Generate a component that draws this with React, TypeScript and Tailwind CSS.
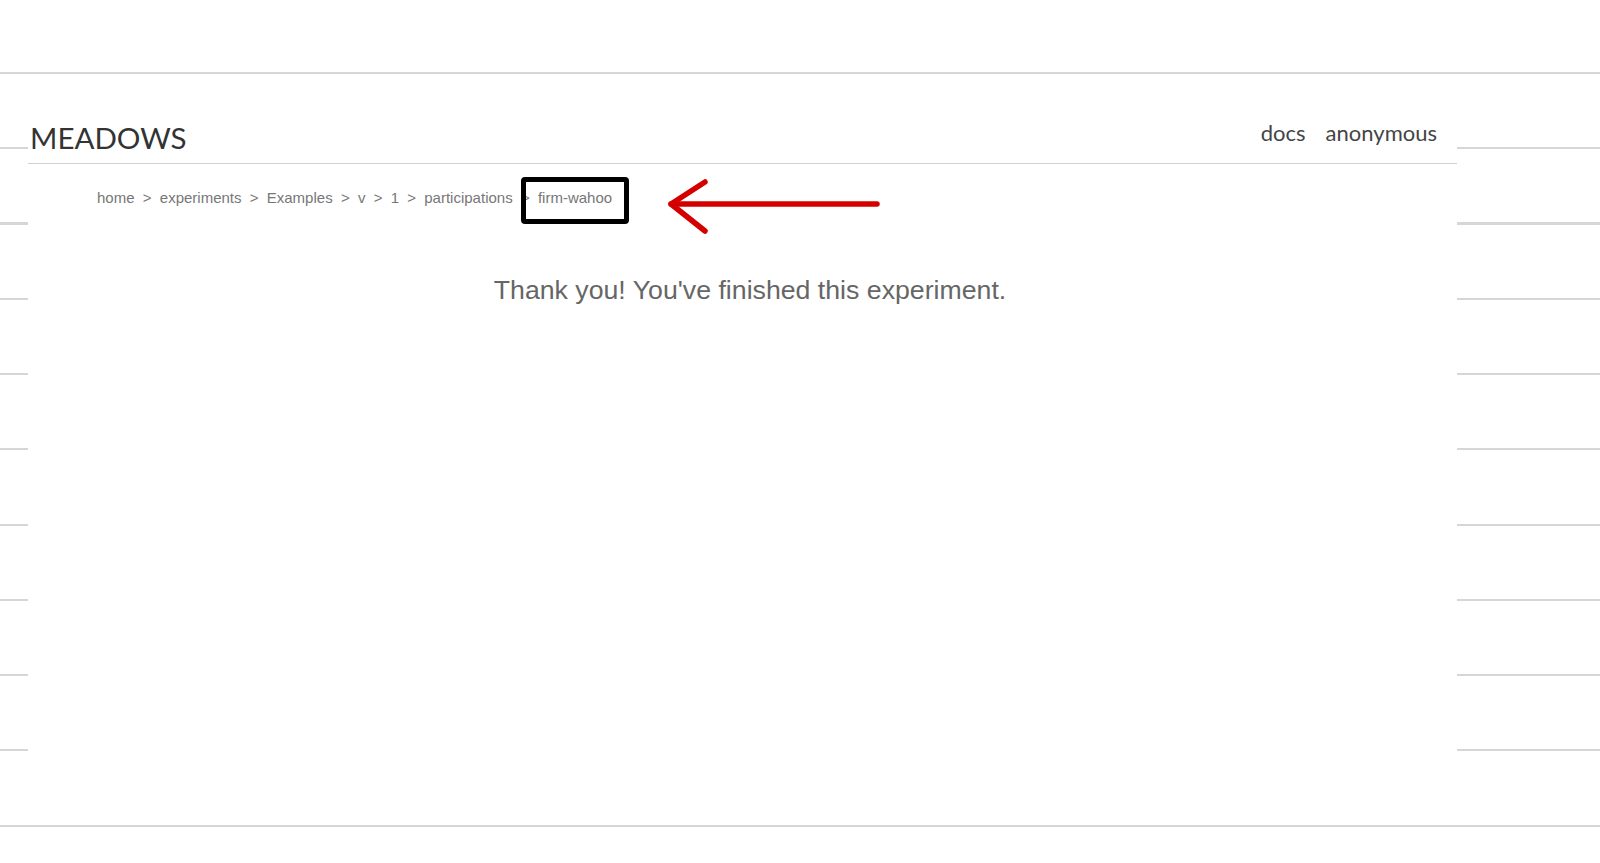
import React from 'react';

const crumbs = ['home', 'experiments', 'Examples', 'v', '1', 'participations'];

const Breadcrumb = () => (
  <div className="pl-[69px] mt-[24px] flex items-center text-[15px] leading-[20px] text-[#777] font-['Liberation_Sans',Arial,sans-serif]">
    {crumbs.map((c) => (
      <React.Fragment key={c}>
        <span>{c}</span>
        <span className="mx-[8.25px]">&gt;</span>
      </React.Fragment>
    ))}
    <span className="relative">
      firm-wahoo
      {/* annotation box */}
      <span className="absolute left-[-17px] right-[-17px] top-[-11px] bottom-[-16px] border-[5px] border-black rounded-[4px]" />
    </span>
  </div>
);

export default function App() {
  return (
    <div className="relative h-[863px] bg-white pt-[72px] overflow-hidden">
      <div className="h-[755px] pt-[3px] bg-[repeating-linear-gradient(to_bottom,#d6d6d6_0px,#d6d6d6_2px,transparent_2px,transparent_75.25px)]">
        <div className="ml-[28px] w-[1429px] h-[748px] bg-white">
          <header className="pt-[45px] pb-[8px] flex items-start justify-between border-b border-[#d0d0d0] font-['Lato',sans-serif]">
            <div className="text-[29.5px] leading-[1.2] text-[#333] pl-[2px]">MEADOWS</div>
            <nav className="flex gap-[20px] pr-[20px] text-[22px] leading-[1.2] text-[#444]">
              <span>docs</span>
              <span>anonymous</span>
            </nav>
          </header>

          <Breadcrumb />

          <div className="mt-[62px] pl-[15px] text-center text-[26.7px] text-[#666] font-['Liberation_Sans',Arial,sans-serif]">
            Thank you! You've finished this experiment.
          </div>
        </div>
      </div>

      {/* red annotation arrow */}
      <svg
        className="absolute left-[662px] top-[176px] pointer-events-none"
        width="224"
        height="60"
        viewBox="0 0 224 60"
        fill="none"
      >
        <path d="M9 28 L215 28" stroke="#d40000" strokeWidth="5.5" strokeLinecap="round" />
        <path d="M43 6 L9 28 L43 55" stroke="#d40000" strokeWidth="5.5" strokeLinecap="round" strokeLinejoin="round" />
      </svg>
    </div>
  );
}
